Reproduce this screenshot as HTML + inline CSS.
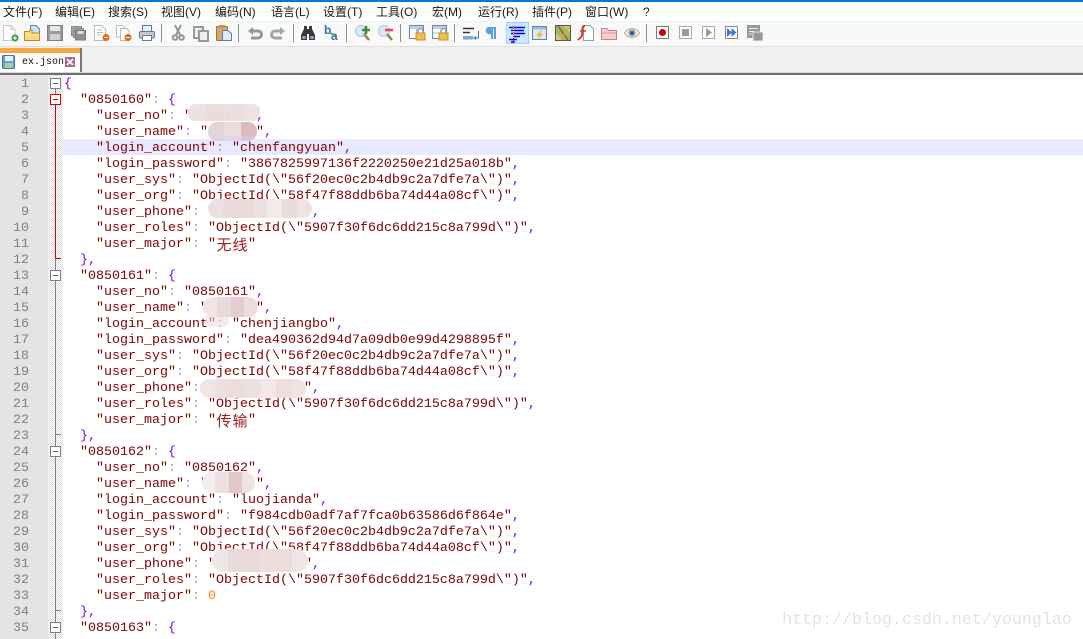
<!DOCTYPE html>
<html lang="zh"><head><meta charset="utf-8"><title>ex.json</title>
<style>
*{margin:0;padding:0;box-sizing:border-box}
html,body{width:1083px;height:639px;overflow:hidden;background:#fff}
#topbar{position:absolute;left:0;top:0;width:1083px;height:2px;background:#0a78d0}
#menu{position:absolute;left:0;top:2px;width:1083px;height:19px;background:#fff}
#menu span{position:absolute;top:2px;font:12px/16px "Liberation Sans","Noto Sans CJK SC",sans-serif;color:#1a1a1a;white-space:nowrap}
#tools{position:absolute;left:0;top:21px;width:1083px;height:25px;background:#f9f9f9;border-top:1px solid #f1f1f1}
#tline{position:absolute;left:0;top:46px;width:1083px;height:1px;background:#dfdfdf}
#tabs{position:absolute;left:0;top:47px;width:1083px;height:26px;background:#f0f0f0}
#tab{position:absolute;left:0;top:1px;width:82px;height:25px;background:#fff;border-right:2px solid #777}
#tab b{position:absolute;left:0;top:0;width:80px;height:5px;background:#f4a742}
#tab span{position:absolute;left:22px;top:8px;font:10px/14px "Liberation Mono",monospace;color:#111}
#rule{position:absolute;left:0;top:72px;width:1083px;height:3px;background:linear-gradient(#d8d8d8 0,#d8d8d8 1px,#6f6f6f 1px,#6f6f6f 3px)}
#marg{position:absolute;left:0;top:75px;width:48px;height:564px;background:#e4e4e4}
#nums{position:absolute;left:0;top:77px;width:48px;color:#808080;font:13.33px/16px "Liberation Mono",monospace;text-align:right;padding-right:19px;white-space:pre}
#fold{position:absolute;left:48px;top:75px;width:15px;height:564px;background-color:#f3f3f3;background-image:repeating-conic-gradient(#e2e2e2 0 25%,#fbfbfb 0 50%);background-size:2px 2px}
#hl{position:absolute;left:63px;top:139px;width:1020px;height:16px;background:#e8e8ff}
#code{position:absolute;left:64px;top:77px;font:13.33px/16px "Liberation Mono",monospace;color:#800000;white-space:pre}
#code i{font-style:normal;color:#8000ff}
#code u{text-decoration:none;color:#a58aff}
#code em{font-style:normal;color:#ff8000}
#code s{text-decoration:none;display:inline-block;width:16px;height:16px;font:15px/15px "Noto Sans CJK SC",sans-serif;text-align:center;vertical-align:top;color:#a02020}
.blob{position:absolute;overflow:hidden;display:flex;opacity:.97}
.blob div{height:100%;flex:1}
#wm{position:absolute;left:782px;top:612px;font:16.67px/18px "Liberation Mono",monospace;color:#e4e4de;white-space:pre}
svg{position:absolute;left:0;top:0}
</style></head><body>
<div id="topbar"></div>
<div id="menu">
<span style="left:3px">文件(F)</span><span style="left:55px">编辑(E)</span><span style="left:108px">搜索(S)</span><span style="left:161px">视图(V)</span><span style="left:215px">编码(N)</span><span style="left:271px">语言(L)</span><span style="left:323px">设置(T)</span><span style="left:376px">工具(O)</span><span style="left:432px">宏(M)</span><span style="left:478px">运行(R)</span><span style="left:532px">插件(P)</span><span style="left:585px">窗口(W)</span><span style="left:643px">?</span>
</div>
<div id="tools"></div>
<div id="tline"></div>
<div id="tabs"><div id="tab"><b></b><span>ex.json</span></div></div>
<div id="rule"></div>
<div id="marg"></div>
<div id="nums">1
2
3
4
5
6
7
8
9
10
11
12
13
14
15
16
17
18
19
20
21
22
23
24
25
26
27
28
29
30
31
32
33
34
35</div>
<div id="fold"></div>
<div id="hl"></div>
<div id="code"><i>{</i>
  "0850160"<u>:</u> <i>{</i>
    "user_no"<u>:</u> "0850160"<i>,</i>
    "user_name"<u>:</u> "      "<i>,</i>
    "login_account"<u>:</u> "chenfangyuan"<i>,</i>
    "login_password"<u>:</u> "3867825997136f2220250e21d25a018b"<i>,</i>
    "user_sys"<u>:</u> "ObjectId(\"56f20ec0c2b4db9c2a7dfe7a\")"<i>,</i>
    "user_org"<u>:</u> "ObjectId(\"58f47f88ddb6ba74d44a08cf\")"<i>,</i>
    "user_phone"<u>:</u> "           "<i>,</i>
    "user_roles"<u>:</u> "ObjectId(\"5907f30f6dc6dd215c8a799d\")"<i>,</i>
    "user_major"<u>:</u> "<s>无</s><s>线</s>"
  <i>},</i>
  "0850161"<u>:</u> <i>{</i>
    "user_no"<u>:</u> "0850161"<i>,</i>
    "user_name"<u>:</u> "      "<i>,</i>
    "login_account"<u>:</u> "chenjiangbo"<i>,</i>
    "login_password"<u>:</u> "dea490362d94d7a09db0e99d4298895f"<i>,</i>
    "user_sys"<u>:</u> "ObjectId(\"56f20ec0c2b4db9c2a7dfe7a\")"<i>,</i>
    "user_org"<u>:</u> "ObjectId(\"58f47f88ddb6ba74d44a08cf\")"<i>,</i>
    "user_phone"<u>:</u> "           "<i>,</i>
    "user_roles"<u>:</u> "ObjectId(\"5907f30f6dc6dd215c8a799d\")"<i>,</i>
    "user_major"<u>:</u> "<s>传</s><s>输</s>"
  <i>},</i>
  "0850162"<u>:</u> <i>{</i>
    "user_no"<u>:</u> "0850162"<i>,</i>
    "user_name"<u>:</u> "      "<i>,</i>
    "login_account"<u>:</u> "luojianda"<i>,</i>
    "login_password"<u>:</u> "f984cdb0adf7af7fca0b63586d6f864e"<i>,</i>
    "user_sys"<u>:</u> "ObjectId(\"56f20ec0c2b4db9c2a7dfe7a\")"<i>,</i>
    "user_org"<u>:</u> "ObjectId(\"58f47f88ddb6ba74d44a08cf\")"<i>,</i>
    "user_phone"<u>:</u> "           "<i>,</i>
    "user_roles"<u>:</u> "ObjectId(\"5907f30f6dc6dd215c8a799d\")"<i>,</i>
    "user_major"<u>:</u> <em>0</em>
  <i>},</i>
  "0850163"<u>:</u> <i>{</i></div>

<!-- pixelated blur patches -->
<div class="blob" style="left:188px;top:104px;width:72px;height:17px;border-radius:7px"><div style="background:#f0e2e2"></div><div style="background:#ecdcdc"></div><div style="background:#eddede"></div><div style="background:#efe2e2"></div></div>
<div class="blob" style="left:208px;top:122px;width:49px;height:19px;border-radius:9px"><div style="background:linear-gradient(#e6d4d6 70%,#dcd2e2 70%)"></div><div style="background:linear-gradient(#ecdcdc 70%,#e0d8ea 70%)"></div><div style="background:linear-gradient(#dbb9bd 70%,#d6c4d6 70%)"></div></div>
<div class="blob" style="left:208px;top:199px;width:104px;height:19px;border-radius:10px"><div style="background:#eddfdf"></div><div style="background:#e9d9d9"></div><div style="background:#e9d8d8"></div><div style="background:#eee0e0"></div><div style="background:#f3ebeb"></div><div style="background:#eadbdb"></div><div style="background:#efe3e3"></div></div>
<div class="blob" style="left:205px;top:314px;width:24px;height:13px;border-radius:6px;opacity:.55"><div style="background:#ecdcdc"></div></div>
<div class="blob" style="left:203px;top:297px;width:55px;height:20px;border-radius:10px"><div style="background:#f0e4e4"></div><div style="background:#e9d9d9"></div><div style="background:#e2cdcf"></div><div style="background:#ecdddd"></div></div>
<div class="blob" style="left:200px;top:379px;width:106px;height:19px;border-radius:9px"><div style="background:#f1e5e5"></div><div style="background:#eedddd"></div><div style="background:#ecdcdc"></div><div style="background:#eee0e0"></div><div style="background:#f2e8e8"></div><div style="background:#eddede"></div><div style="background:#f0e3e3"></div></div>
<div class="blob" style="left:202px;top:472px;width:53px;height:21px;border-radius:10px"><div style="background:#f5eded"></div><div style="background:#ecdfdf"></div><div style="background:#e0c6c8"></div><div style="background:#efe4e4"></div></div>
<div class="blob" style="left:212px;top:549px;width:96px;height:23px;border-radius:11px"><div style="background:#f1e6e6"></div><div style="background:#ecdada"></div><div style="background:#ebd9d9"></div><div style="background:#eddcdc"></div><div style="background:#ecdbdb"></div><div style="background:#f1e6e6"></div></div>

<div id="wm">http://blog.csdn.net/younglao</div>

<svg width="1083" height="639" viewBox="0 0 1083 639" shape-rendering="geometricPrecision">
<!-- fold margin -->
<g fill="none">
<path d="M55.5 89V94M55.5 259V270M55.5 281V434.500H61M55.5 434V446M55.5 457V610.500H61M55.5 610V622M55.5 633V639" stroke="#808080"/>
<path d="M55.5 105V258.500H61" stroke="#e00000"/>
<rect x="50.5" y="78.5" width="10" height="10" fill="#fff" stroke="#808080"/>
<path d="M53 83.5H58" stroke="#606060"/>
<rect x="50.5" y="94.5" width="10" height="10" fill="#fff" stroke="#e00000"/>
<path d="M53 99.5H58" stroke="#e00000"/>
<rect x="50.5" y="270.5" width="10" height="10" fill="#fff" stroke="#808080"/>
<path d="M53 275.5H58" stroke="#606060"/>
<rect x="50.5" y="446.5" width="10" height="10" fill="#fff" stroke="#808080"/>
<path d="M53 451.5H58" stroke="#606060"/>
<rect x="50.5" y="622.5" width="10" height="10" fill="#fff" stroke="#808080"/>
<path d="M53 627.5H58" stroke="#606060"/>
</g>
<!-- tab icons -->
<g>
<rect x="2.5" y="55.5" width="12" height="13" rx="1" fill="#6f9fd8" stroke="#3f74b8"/>
<rect x="5" y="56" width="8" height="5" fill="#e8f0fa"/>
<rect x="5" y="63" width="8" height="5" fill="#9fd09f"/>
<rect x="65" y="57" width="10" height="10" fill="#a8668a"/>
<path d="M67 59L73 65M73 59L67 65" stroke="#fff" stroke-width="1.8"/>
</g>
<!-- toolbar separators -->
<path d="M161.5 24V42M238.5 24V42M293.5 24V42M346.5 24V42M400.5 24V42M454.5 24V42M646.5 24V42" stroke="#8f8f8f"/>
<!-- active button -->
<rect x="506.5" y="22.5" width="22" height="21" fill="#cce8ff" stroke="#99d1ff"/>
<g transform="translate(0,25)">
<!-- new -->
<g transform="translate(2,0)"><path d="M1.5.5H9L13 4.500V15.500H1.500Z" fill="#fff" stroke="#c8c8c8"/><path d="M9 .5V4.500H13" fill="#eee" stroke="#c8c8c8"/><circle cx="13" cy="13" r="3.500" fill="#3f9a3f"/><path d="M11 13H15M13 11V15" stroke="#fff"/></g>
<!-- open -->
<g transform="translate(24,0)"><path d="M6.500.500H12L15.500 4V11H6.500Z" fill="#cfe2f7" stroke="#4f86c6"/><path d="M.5 6.500H5L6 5H8V8H15.500V15.500H.5Z" fill="#f8d77f" stroke="#c08a22"/><path d="M1 10H15" stroke="#fdeeb8"/></g>
<!-- save -->
<g transform="translate(47,0)"><rect x=".5" y=".5" width="15" height="15" fill="#9a9a9a" stroke="#808080"/><rect x="3" y="1" width="10" height="5" fill="#e6e6e6"/><rect x="3" y="9" width="10" height="6" fill="#d0d0d0"/></g>
<!-- save all -->
<g transform="translate(71,1)"><rect x=".5" y=".5" width="10" height="9" fill="#aaa" stroke="#8a8a8a"/><rect x="2.500" y="2.500" width="10" height="9" fill="#9e9e9e" stroke="#8a8a8a"/><rect x="4.500" y="4.500" width="10" height="9.500" fill="#8f8f8f" stroke="#7a7a7a"/><rect x="6.500" y="5" width="6" height="3" fill="#ddd"/></g>
<!-- close -->
<g transform="translate(94,0)"><path d="M.5.5H7.500L11.500 4.500V15.500H.5Z" fill="#fff" stroke="#bbb"/><path d="M3 5H8M3 7.500H9M3 10H7" stroke="#b8b8b8"/><circle cx="12" cy="12.500" r="3.500" fill="#e8661a"/><path d="M10 12.500H14" stroke="#fff"/></g>
<!-- close all -->
<g transform="translate(116,0)"><path d="M.5.5H6.500L9 3V12H.5Z" fill="#fff" stroke="#bbb"/><path d="M4.500 3.500H10.500L13 6V15.500H4.500Z" fill="#fff" stroke="#bbb"/><circle cx="12" cy="12.500" r="3.500" fill="#e8661a"/><path d="M10 12.500H14" stroke="#fff"/></g>
<!-- print -->
<g transform="translate(139,0)"><rect x="3.500" y=".5" width="9" height="6" fill="#e8f0fa" stroke="#4f7fb8"/><rect x=".5" y="6.500" width="15" height="6.500" rx="1.500" fill="#c3cad3" stroke="#6b7888"/><rect x="3.500" y="10.500" width="9" height="5" fill="#fff" stroke="#6b7888"/></g>
<!-- cut -->
<g transform="translate(172,0)" fill="none" stroke="#959595" stroke-width="2"><path d="M9 0L4 10M3 0L8 10"/><circle cx="3" cy="12.500" r="2.300"/><circle cx="9.500" cy="12.500" r="2.300"/></g>
<!-- copy -->
<g transform="translate(193,1)"><rect x="1" y="1" width="9" height="11" fill="#eee" stroke="#999" stroke-width="2"/><rect x="6" y="5" width="9" height="10" fill="#eee" stroke="#999" stroke-width="2"/></g>
<!-- paste -->
<g transform="translate(216,0)"><rect x=".5" y="1.500" width="11" height="14" rx="1" fill="#d7a66b" stroke="#a86d2a"/><rect x="3" y="0" width="6" height="3" fill="#c8924f"/><path d="M6.500 5.500H12L15.500 8.500V15.500H6.500Z" fill="#dfeafa" stroke="#4a80c8"/></g>
<!-- undo -->
<g transform="translate(248,2)" fill="none"><path d="M4 4H10A3.500 3.500 0 0 1 10 11H3" stroke="#959595" stroke-width="3"/><path d="M0 4L5 0V8Z" fill="#959595"/></g>
<!-- redo -->
<g transform="translate(271,2)" fill="none"><path d="M10 4H4A3.500 3.500 0 0 0 4 11H11" stroke="#a5a5a5" stroke-width="3"/><path d="M14 4L9 0V8Z" fill="#a5a5a5"/></g>
<!-- find -->
<g transform="translate(301,1)"><path d="M3 0H6V3H8V0H11V3L14 9V14H8V8H6V14H0V9L3 3Z" fill="#33393f"/><path d="M1 10H5V13H1ZM9 10H13V13H9Z" fill="#8d99a5"/></g>
<!-- replace -->
<g transform="translate(324,0)" font-family="Liberation Sans,sans-serif" font-weight="bold" font-size="12"><text x="0" y="9" fill="#2a6fc0">b</text><text x="7" y="15" fill="#2a6fc0">a</text><path d="M5 7L11 11" stroke="#5ea85e" stroke-width="2"/></g>
<!-- zoom in -->
<g transform="translate(355,0)"><circle cx="6" cy="6" r="5.500" fill="#d8e8f8" stroke="#a8c4e2"/><path d="M9 9L14 15" stroke="#a37b4a" stroke-width="2.500"/><path d="M11 1V9M7 5H15" stroke="#3d8a3d" stroke-width="2.600"/></g>
<!-- zoom out -->
<g transform="translate(378,0)"><circle cx="6" cy="6" r="5.500" fill="#dde6f4" stroke="#b5c8e2"/><path d="M9 9L14 15" stroke="#a37b4a" stroke-width="2.500"/><path d="M7 5H15" stroke="#e0475a" stroke-width="2.600"/></g>
<!-- sync v -->
<g transform="translate(409,0)"><rect x=".5" y=".5" width="14" height="13" fill="#fff" stroke="#6b8ab0"/><rect x="1" y="1" width="13" height="3" fill="#bcd0e8"/><path d="M7.500 4V13" stroke="#9fb6d0"/><rect x="7" y="8" width="9" height="7" fill="#f1bf4e" stroke="#c98f22"/><path d="M9 8V6A2.500 2.500 0 0 1 14 6V8" fill="none" stroke="#999" stroke-width="1.500"/></g>
<!-- sync h -->
<g transform="translate(432,0)"><rect x=".5" y=".5" width="14" height="13" fill="#fff" stroke="#6b8ab0"/><rect x="1" y="1" width="13" height="3" fill="#bcd0e8"/><path d="M1 8H14" stroke="#9fb6d0"/><rect x="7" y="8" width="9" height="7" fill="#f1bf4e" stroke="#c98f22"/><path d="M9 8V6A2.500 2.500 0 0 1 14 6V8" fill="none" stroke="#999" stroke-width="1.500"/></g>
<!-- wrap -->
<g transform="translate(463,2)"><path d="M0 1.500H11M0 5.500H7" stroke="#333" stroke-width="1.500"/><rect x="0" y="9" width="10" height="3.500" fill="#7da7d8"/><path d="M15.500 4V11H11" fill="none" stroke="#3f78c0"/><path d="M13 9V13L10 11Z" fill="#3f78c0"/></g>
<!-- pilcrow -->
<g transform="translate(487,2)" fill="#5f9fe0"><path d="M1 0H9V12H7V2H6V12H4V7A3.500 3.500 0 0 1 1 0Z"/></g>
<!-- indent guide active -->
<g transform="translate(509,1)"><path d="M4.500 0V16" stroke="#e02020" stroke-dasharray="1 1"/><path d="M5 1.500H16M5 4.500H15M5 7.500H16M5 10.500H11M0 1.500H4M2 4.500H4M2 7.500H4M0 13.500H8M2 16H6" stroke="#0000d8" stroke-width="1.600"/></g>
<!-- doc map / lightning -->
<g transform="translate(532,1)"><rect x=".5" y=".5" width="14" height="13" fill="#dfe8f4" stroke="#5a86bc"/><rect x="1" y="1" width="13" height="2.500" fill="#9dbce0"/><path d="M9 4L4 10H7L5 14L11 8H8L10 4Z" fill="#f0b838"/></g>
<!-- map -->
<g transform="translate(555,0)"><rect x=".5" y=".5" width="15" height="15" fill="#d7c879" stroke="#555"/><path d="M1 8L8 15H15V8L8 1H1Z" fill="#8fbf6f"/><path d="M3 1L13 15" stroke="#d04020" stroke-width="1.500"/><path d="M14 2L6 15" stroke="#e0a030" stroke-width="1.200"/></g>
<!-- function list -->
<g transform="translate(578,0)"><path d="M5.500.5H12L15.500 4V15.500H5.500Z" fill="#fff" stroke="#999"/><path d="M7 1C3 1 5 6 4 10S1 13 0 15" fill="none" stroke="#d83a3a" stroke-width="2"/><path d="M2 6H8" stroke="#d83a3a" stroke-width="1.500"/></g>
<!-- folder -->
<g transform="translate(601,1)"><path d="M.5 2.500H6L7.500 4.500H15.500V13.500H.5Z" fill="#f3cfcf" stroke="#cf7f7f"/><path d="M1 7H15" stroke="#e09a9a"/></g>
<!-- eye -->
<g transform="translate(624,1)"><path d="M.5 7C4 1 12 1 15.500 7C12 13 4 13 .5 7Z" fill="#f4ecd8" stroke="#c4a878"/><circle cx="8" cy="7" r="3.500" fill="#6f9fd0"/><circle cx="8" cy="7" r="1.500" fill="#28486c"/></g>
<!-- macro rec -->
<g transform="translate(656,1)"><rect x=".5" y=".5" width="12" height="12" fill="#fff" stroke="#777"/><circle cx="6.500" cy="6.500" r="3.500" fill="#c80010"/></g>
<!-- stop -->
<g transform="translate(679,1)"><rect x=".5" y=".5" width="12" height="12" fill="#fff" stroke="#aaa"/><rect x="3" y="3" width="7" height="7" fill="#9a9a9a"/></g>
<!-- play -->
<g transform="translate(702,1)"><rect x=".5" y=".5" width="12" height="12" fill="#fff" stroke="#aaa"/><path d="M4 2L10 6.500L4 11Z" fill="#9a9a9a"/></g>
<!-- play multiple -->
<g transform="translate(725,1)"><rect x=".5" y=".5" width="12" height="12" fill="#fff" stroke="#888"/><path d="M2 2L7 6.500L2 11ZM6.500 2L11.500 6.500L6.500 11Z" fill="#3f78dc"/></g>
<!-- save macro -->
<g transform="translate(747,0)"><rect x="0" y="0" width="13" height="13" fill="#999"/><path d="M2 3.500H11M2 6.500H7M2 9H5" stroke="#eee"/><rect x="6" y="7" width="10" height="9" fill="#999" stroke="#f4f4f4" stroke-width=".8"/></g>
</g>
</svg>
</body></html>
